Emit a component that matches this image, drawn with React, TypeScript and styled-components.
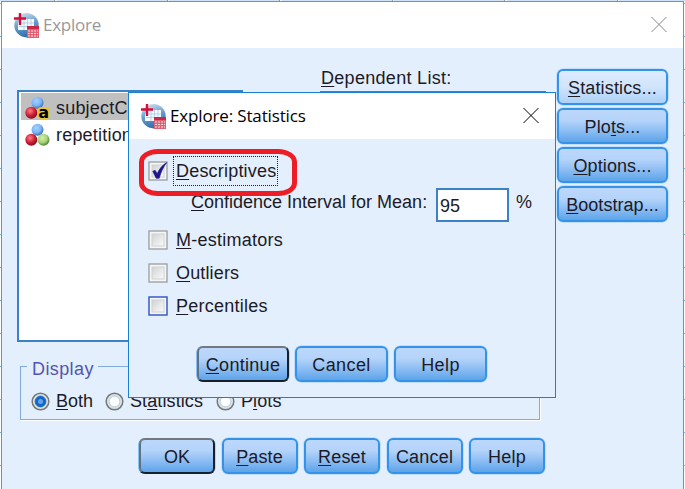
import React from 'react';
import styled, { createGlobalStyle } from 'styled-components';

const GlobalStyle = createGlobalStyle`
  *, *::before, *::after { box-sizing: border-box; }
  html, body { margin: 0; padding: 0; overflow: hidden; }
  body { font-family: "Liberation Sans", Arial, sans-serif; font-size: 18px; color: #1d1a26; }
`;

const Sheet = styled.div`
  width: 685px;
  height: 489px;
  position: relative;
  padding: 1px 1px 0 1px;
  overflow: hidden;
  background:
    repeating-linear-gradient(to right, #cfe2f6 0 54.5px, #8b98a6 54.5px 55.5px, #f7fafc 55.5px 57px, #cfe2f6 57px 112.5px) 0 0 / 685px 1px no-repeat,
    repeating-linear-gradient(to bottom, transparent 0 3px, #7fb0e0 3px 4px, transparent 4px 33px) 0 0 / 685px 489px no-repeat,
    #ffffff;
`;

const Dialog = styled.section`
  width: 683px;
  height: 490px;
  display: flex;
  flex-direction: column;
  border: 1px solid #858d97;
  background: #e3effc;
`;

const TitleBar = styled.header<{ $muted?: boolean }>`
  height: 46px;
  flex: none;
  display: flex;
  align-items: center;
  padding: 0 16px 0 12px;
  background: #fff;
  color: ${p => (p.$muted ? '#999' : '#000')};
  font-family: "Open Sans", "Noto Sans", sans-serif;
  font-size: 17px;
`;

const Title = styled.h1<{ $track: number }>`
  flex: 1;
  margin: 0 0 0 4px;
  font: inherit;
  line-height: 24px;
  white-space: nowrap;
  letter-spacing: ${p => p.$track}px;
`;

const Body = styled.div`
  height: 318px;
  display: flex;
  padding: 20px 15px 0 15px;
`;

const ListBox = styled.div`
  width: 226px;
  height: 252px;
  margin-top: 22px;
  padding: 1px 2px;
  border: 2px solid #3c80c6;
  background: #fff;
`;

const ListRow = styled.div<{ $selected?: boolean }>`
  height: 27px;
  display: flex;
  align-items: center;
  gap: 6px;
  padding: 2px 4px 0;
  background: ${p => (p.$selected ? '#c0c0c0' : '#fff')};
`;

const DependentColumn = styled.div`
  width: 226px;
  margin-left: 77px;
  padding-left: 1px;
`;

const DependentBox = styled.div`
  height: 70px;
  margin: 2px 0 0 -1px;
  border: 2px solid #3c80c6;
  background: #fff;
`;

const SideButtons = styled.div`
  margin: 1px 0 0 11px;
  display: flex;
  flex-direction: column;
  gap: 3px;
`;

const Button = styled.button<{ $width: number; $kind?: 'default' | 'light' }>`
  width: ${p => p.$width}px;
  height: 36px;
  flex: none;
  display: flex;
  align-items: center;
  justify-content: center;
  padding: 2px 0 0;
  border: 2px solid;
  border-color: ${p => (p.$kind === 'default' ? '#74777c #16202b #16202b #5f7283' : '#3493e8')};
  border-radius: 6px;
  box-shadow: ${p => (p.$kind === 'default' ? '-0.5px 0 0 #3493e8, 0.5px 0 0 #83b9ec' : '0 0 0 0.5px #a4cdf5')};
  background: ${p =>
    p.$kind === 'light'
      ? 'linear-gradient(#deebfd, #d0e4fc 50%, #acd1f7)'
      : 'linear-gradient(#bcd7fb, #b5d4fa 32%, #8dbdf3 65%, #5ca4e9)'};
  font: 18px/20px "Liberation Sans", Arial, sans-serif;
  color: #1d1a26;
`;

const Text = styled.span<{ $track?: number }>`
  line-height: 20px;
  white-space: pre;
  letter-spacing: ${p => p.$track ?? 0}px;
`;

const Mnemonic = styled.span`
  text-decoration: underline;
  text-decoration-thickness: 1px;
  text-underline-offset: 2px;
  text-decoration-skip-ink: none;
`;

const Group = styled.fieldset`
  width: 521px;
  height: 66px;
  margin: -11px 0 0 18px;
  padding: 8px 0 0 11px;
  border: 0;
  min-width: 0;
  display: flex;
  flex-direction: column;
  background:
    linear-gradient(#7fabdd, #7fabdd) 0 11px / 1px 54px no-repeat,
    linear-gradient(#7fabdd, #7fabdd) 519px 11px / 1px 54px no-repeat,
    linear-gradient(#fff, #fff) 520px 11px / 1px 55px no-repeat,
    linear-gradient(#7fabdd, #7fabdd) 0 11px / 7px 1px no-repeat,
    linear-gradient(#7fabdd, #7fabdd) 78px 11px / 442px 1px no-repeat,
    linear-gradient(#7fabdd, #7fabdd) 0 64px / 520px 1px no-repeat,
    linear-gradient(#fff, #fff) 0 65px / 521px 1px no-repeat;
`;

const GroupTitle = styled.div`
  height: 20px;
  margin-top: -4px;
  padding-left: 1px;
  color: #5456ae;
`;

const Radios = styled.div`
  display: flex;
  align-items: center;
  height: 20px;
  margin-top: 12px;
`;

const RadioOption = styled.label<{ $width: number }>`
  width: ${p => p.$width}px;
  display: flex;
  align-items: center;
  gap: 6px;
`;

const Footer = styled.footer`
  display: flex;
  gap: 6.5px;
  padding: 17px 0 0 137px;
`;

const Modal = styled.section`
  position: absolute;
  left: 128px;
  top: 92px;
  width: 428px;
  height: 306px;
  display: flex;
  flex-direction: column;
  border: 1px solid #1a80d4;
  background: #e3effc;
`;

const Options = styled.div`
  height: 207px;
  padding: 17px 0 0 19px;
`;

const CheckRow = styled.label<{ $height: number }>`
  height: ${p => p.$height}px;
  display: flex;
  align-items: center;
`;

const FocusText = styled.span<{ $focused?: boolean }>`
  display: flex;
  align-items: center;
  height: ${p => (p.$focused ? 30 : 24)}px;
  margin-left: 5px;
  padding: 1px 0 0 2px;
  width: ${p => (p.$focused ? '105px' : 'auto')};
  border: 1px ${p => (p.$focused ? 'dotted #222' : 'solid transparent')};
`;

const IntervalRow = styled.div`
  height: 34px;
  display: flex;
  align-items: flex-start;
  margin: 3px 0 1px 43px;
`;

const IntervalLabel = styled.label`
  width: 245px;
  padding-top: 4px;
  line-height: 20px;
`;

const Input = styled.input`
  width: 73px;
  height: 34px;
  padding: 2px 0 0 2px;
  border: 2px solid #3c80c6;
  border-radius: 0;
  background: #fff;
  font: 18px/20px "Liberation Sans", Arial, sans-serif;
  color: #1d1a26;
  outline: none;
`;

const Percent = styled.span`
  margin-left: 7px;
  padding-top: 4px;
  line-height: 20px;
`;

const ModalButtons = styled.div`
  display: flex;
  gap: 6px;
  padding-left: 68px;
`;

const Highlight = styled.div`
  position: absolute;
  left: 139px;
  top: 149px;
  width: 158px;
  height: 47px;
  border: 5px solid #ee1c25;
  border-radius: 19px / 13px;
`;

const Drawing = styled.svg`
  display: block;
  flex: none;
  overflow: visible;
`;

function AppIcon({ id }: { id: string }) {
  return (
    <Drawing width="25" height="25" viewBox="0 0 25 25">
      <defs>
        <linearGradient id={id} x1="0.3" y1="0" x2="0.6" y2="1">
          <stop offset="0" stopColor="#c9dfef" />
          <stop offset="0.45" stopColor="#6ba0cc" />
          <stop offset="1" stopColor="#2a69a8" />
        </linearGradient>
      </defs>
      <circle cx="12.5" cy="12.2" r="12.2" fill={`url(#${id})`} />
      <path d="M7 6h13v11H4V10z" fill="#f5fbff" />
      <path d="M5 10h15M5 13.5h15M10 6v11M13.5 6v11M17 6v11" stroke="#a8c8e6" strokeWidth="0.8" />
      <path d="M0 5.5h12M6 0v12" stroke="#fff" strokeWidth="3.5" opacity="0.4" />
      <path d="M0 5.5h12M6 0v12" stroke="#d80a37" strokeWidth="2.4" />
      <path d="M13 13h12v12H13z" fill="#df6172" />
      <path d="M13 13h12v3H13z" fill="#c8284a" />
      <path d="M14 18h10M14 20.5h10M14 23h10" stroke="#fbdde1" strokeWidth="1.1" strokeDasharray="2 1" />
    </Drawing>
  );
}

function CloseIcon({ color }: { color: string }) {
  return (
    <Drawing width="16" height="16" viewBox="0 0 16 16">
      <path d="M.5 0l15 15M15.5 0l-15 15" stroke={color} strokeWidth="1" />
    </Drawing>
  );
}

function NominalIcon({ letter }: { letter?: boolean }) {
  const key = letter ? 's' : 'n';
  const ball = (name: string, light: string, mid: string, dark: string) => (
    <radialGradient id={`${key}-${name}`} cx="0.4" cy="0.35" r="0.65">
      <stop offset="0" stopColor={light} />
      <stop offset="0.6" stopColor={mid} />
      <stop offset="1" stopColor={dark} />
    </radialGradient>
  );
  return (
    <Drawing width="25" height="24" viewBox="0 0 25 24">
      <defs>
        {ball('blue', '#a7d1ff', '#7db5f6', '#3c74bd')}
        {ball('red', '#ff8088', '#cd2035', '#8d0a20')}
        {ball('green', '#d2efb0', '#a5d477', '#568336')}
      </defs>
      <circle cx="12.5" cy="6.7" r="6" fill={`url(#${key}-blue)`} />
      <circle cx="6.3" cy="16.7" r="6" fill={`url(#${key}-red)`} />
      {letter ? (
        <>
          <rect x="12.5" y="11" width="12" height="12" rx="4" fill="#e9c62f" />
          <text x="13.3" y="22.3" fontFamily="DejaVu Sans" fontWeight="700" fontSize="16" fill="#000">a</text>
        </>
      ) : (
        <circle cx="18.5" cy="16.7" r="6" fill={`url(#${key}-green)`} />
      )}
    </Drawing>
  );
}

function RadioIcon({ checked }: { checked?: boolean }) {
  return (
    <Drawing width="19" height="19" viewBox="0 0 19 19">
      <circle cx="9.5" cy="9.5" r="8.3" fill="#e0e4e2" stroke="#75797a" strokeWidth="1.5" />
      <circle cx="9.5" cy="9.5" r="5.4" fill={checked ? '#1268c6' : '#fff'} stroke={checked ? '#1268c6' : '#a5c5e5'} strokeWidth="0.9" />
      {checked && <circle cx="9.5" cy="9.5" r="2.5" fill="#63a4ec" />}
    </Drawing>
  );
}

function CheckIcon({ checked, hot }: { checked?: boolean; hot?: boolean }) {
  const id = `well-${checked ? 'c' : hot ? 'h' : 'p'}`;
  return (
    <Drawing width="20" height="20" viewBox="0 0 20 20">
      <defs>
        <linearGradient id={id} x1="0" y1="0" x2="1" y2="1">
          <stop offset="0" stopColor="#d0d2d3" />
          <stop offset="1" stopColor="#fbfbfb" />
        </linearGradient>
      </defs>
      <rect x="1" y="1" width="18" height="18" fill="#f4f5f5" stroke={hot ? '#2d50c8' : '#a0a3a4'} strokeWidth="1.4" />
      <rect x="4" y="4" width="12" height="12" fill={`url(#${id})`} stroke="#d0d2d3" />
      {checked && <path d="M4.8 10.2l2.4-.8 2 3.3C11 8.5 14 4.5 18.6 1.6c-3.6 5-5.8 9.8-7.4 15.6H8.2z" fill="#1c158c" stroke="#1c158c" strokeWidth="0.7" />}
    </Drawing>
  );
}

/** Text with an underlined keyboard mnemonic at the given index. */
function Label({ text, at, track }: { text: string; at?: number; track?: number }) {
  if (at === undefined) return <Text $track={track}>{text}</Text>;
  return (
    <Text $track={track}>
      {text.slice(0, at)}
      <Mnemonic>{text[at]}</Mnemonic>
      {text.slice(at + 1)}
    </Text>
  );
}

export default function App() {
  return (
    <Sheet>
      <GlobalStyle />
      <Dialog>
        <TitleBar $muted>
          <AppIcon id="globe-main" />
          <Title $track={-0.25}>Explore</Title>
          <CloseIcon color="#888" />
        </TitleBar>
        <Body>
          <ListBox>
            <ListRow $selected><NominalIcon letter /><Label text="subjectCode" track={0.2} /></ListRow>
            <ListRow><NominalIcon /><Label text="repetition" track={0.2} /></ListRow>
          </ListBox>
          <DependentColumn>
            <Label text="Dependent List:" at={0} track={0.3} />
            <DependentBox />
          </DependentColumn>
          <SideButtons>
            <Button $width={111} $kind="light"><Label text="Statistics..." at={0} track={0.15} /></Button>
            <Button $width={111}><Label text="Plots..." at={3} track={0.1} /></Button>
            <Button $width={111}><Label text="Options..." at={0} track={0.1} /></Button>
            <Button $width={111}><Label text="Bootstrap..." at={0} track={0.05} /></Button>
          </SideButtons>
        </Body>
        <Group>
          <GroupTitle><Label text="Display" track={0.4} /></GroupTitle>
          <Radios>
            <RadioOption $width={74}><RadioIcon checked /><Label text="Both" at={0} /></RadioOption>
            <RadioOption $width={111}><RadioIcon /><Label text="Statistics" at={2} track={0.1} /></RadioOption>
            <RadioOption $width={90}><RadioIcon /><Label text="Plots" at={1} track={0.1} /></RadioOption>
          </Radios>
        </Group>
        <Footer>
          <Button $width={76} $kind="default"><Label text="OK" /></Button>
          <Button $width={76}><Label text="Paste" at={0} track={0.1} /></Button>
          <Button $width={76}><Label text="Reset" at={0} track={0.2} /></Button>
          <Button $width={76}><Label text="Cancel" track={0.2} /></Button>
          <Button $width={76}><Label text="Help" track={0.3} /></Button>
        </Footer>
      </Dialog>

      <Modal>
        <TitleBar>
          <AppIcon id="globe-modal" />
          <Title $track={-0.15}>Explore: Statistics</Title>
          <CloseIcon color="#000" />
        </TitleBar>
        <Options>
          <CheckRow $height={29}><CheckIcon checked /><FocusText $focused><Label text="Descriptives" at={0} track={0.2} /></FocusText></CheckRow>
          <IntervalRow>
            <IntervalLabel><Label text="Confidence Interval for Mean:" at={0} /></IntervalLabel>
            <Input defaultValue="95" />
            <Percent>%</Percent>
          </IntervalRow>
          <CheckRow $height={33}><CheckIcon /><FocusText><Label text="M-estimators" at={0} track={0.25} /></FocusText></CheckRow>
          <CheckRow $height={33}><CheckIcon /><FocusText><Label text="Outliers" at={0} track={0.15} /></FocusText></CheckRow>
          <CheckRow $height={33}><CheckIcon hot /><FocusText><Label text="Percentiles" at={0} track={0.25} /></FocusText></CheckRow>
        </Options>
        <ModalButtons>
          <Button $width={92} $kind="default"><Label text="Continue" at={0} track={0.3} /></Button>
          <Button $width={93}><Label text="Cancel" track={0.4} /></Button>
          <Button $width={93}><Label text="Help" track={0.4} /></Button>
        </ModalButtons>
      </Modal>
      <Highlight />
    </Sheet>
  );
}
